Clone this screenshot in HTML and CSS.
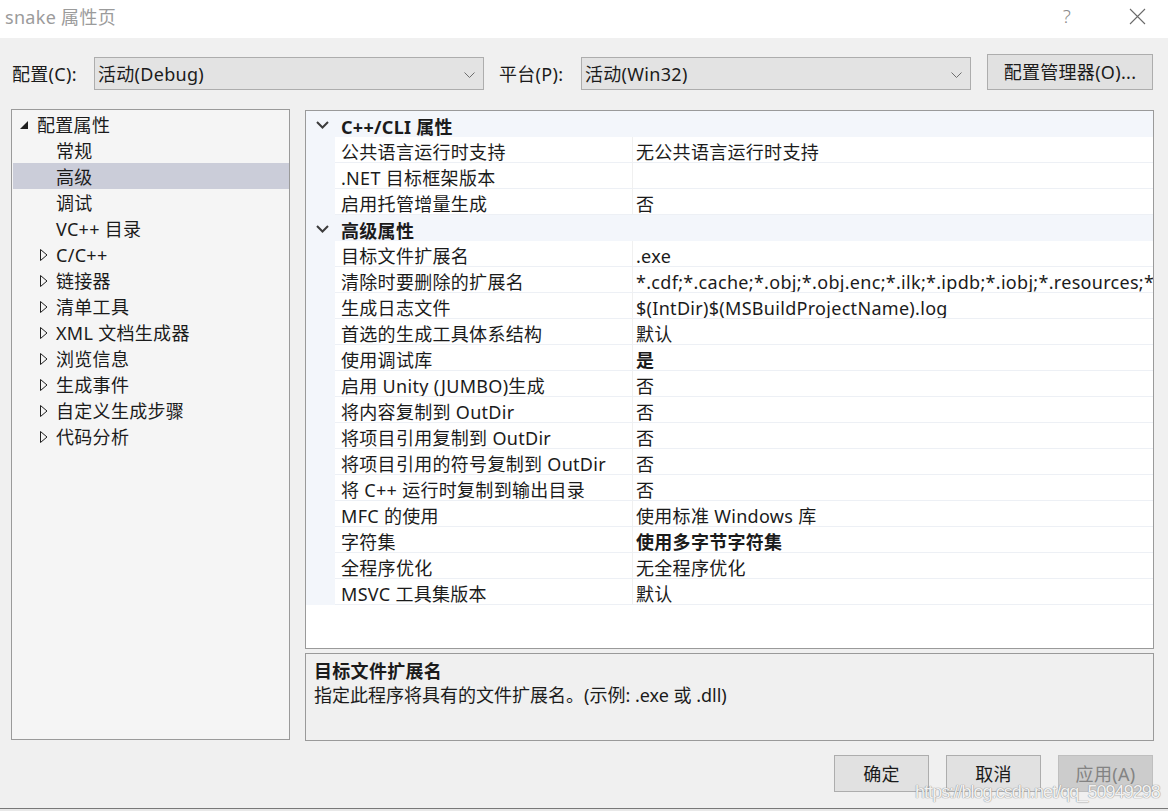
FILE: index.html
```html
<!DOCTYPE html>
<html lang="zh-CN">
<head>
<meta charset="utf-8">
<title>snake 属性页</title>
<link rel="stylesheet" href="styles.css">
</head>
<body>
<div class="window">
  <div class="titlebar">
    <span class="title">snake 属性页</span>
    <span class="help">?</span>
    <svg class="close" width="17" height="17" viewBox="0 0 17 17"><path d="M1 1L16 16M16 1L1 16" stroke="#6a6a6a" stroke-width="1.1" fill="none"/></svg>
  </div>

  <div class="toolbar">
    <span class="lbl">配置(C):</span>
    <div class="combo"><span>活动(Debug)</span><svg width="11" height="6" viewBox="0 0 11 6"><path d="M0.5 0.5L5.5 5.5L10.5 0.5" stroke="#6d6d6d" fill="none"/></svg></div>
    <span class="lbl lbl2">平台(P):</span>
    <div class="combo"><span>活动(Win32)</span><svg width="11" height="6" viewBox="0 0 11 6"><path d="M0.5 0.5L5.5 5.5L10.5 0.5" stroke="#6d6d6d" fill="none"/></svg></div>
    <button class="btn mgr">配置管理器(O)...</button>
  </div>

  <div class="content">
    <div class="tree">
      <div class="node root"><svg width="8" height="8" viewBox="0 0 8 8"><polygon points="8,0 8,8 0,8" fill="#1e1e1e"/></svg><span>配置属性</span></div>
      <div class="node leaf">常规</div>
      <div class="node leaf sel">高级</div>
      <div class="node leaf">调试</div>
      <div class="node leaf">VC++ 目录</div>
      <div class="node coll"><svg width="8" height="12" viewBox="0 0 8 12"><polygon points="0.5,0.5 7,6 0.5,11.5" fill="none" stroke="#1e1e1e"/></svg><span>C/C++</span></div>
      <div class="node coll"><svg width="8" height="12" viewBox="0 0 8 12"><polygon points="0.5,0.5 7,6 0.5,11.5" fill="none" stroke="#1e1e1e"/></svg><span>链接器</span></div>
      <div class="node coll"><svg width="8" height="12" viewBox="0 0 8 12"><polygon points="0.5,0.5 7,6 0.5,11.5" fill="none" stroke="#1e1e1e"/></svg><span>清单工具</span></div>
      <div class="node coll"><svg width="8" height="12" viewBox="0 0 8 12"><polygon points="0.5,0.5 7,6 0.5,11.5" fill="none" stroke="#1e1e1e"/></svg><span>XML 文档生成器</span></div>
      <div class="node coll"><svg width="8" height="12" viewBox="0 0 8 12"><polygon points="0.5,0.5 7,6 0.5,11.5" fill="none" stroke="#1e1e1e"/></svg><span>浏览信息</span></div>
      <div class="node coll"><svg width="8" height="12" viewBox="0 0 8 12"><polygon points="0.5,0.5 7,6 0.5,11.5" fill="none" stroke="#1e1e1e"/></svg><span>生成事件</span></div>
      <div class="node coll"><svg width="8" height="12" viewBox="0 0 8 12"><polygon points="0.5,0.5 7,6 0.5,11.5" fill="none" stroke="#1e1e1e"/></svg><span>自定义生成步骤</span></div>
      <div class="node coll"><svg width="8" height="12" viewBox="0 0 8 12"><polygon points="0.5,0.5 7,6 0.5,11.5" fill="none" stroke="#1e1e1e"/></svg><span>代码分析</span></div>
    </div>

    <div class="right">
      <div class="pgrid">
        <div class="cat"><div class="gut"><svg width="13" height="8" viewBox="0 0 13 8"><path d="M1 1L6.5 6.5L12 1" stroke="#3c3c3c" stroke-width="2" fill="none"/></svg></div><div class="catname">C++/CLI 属性</div></div>
        <div class="row"><div class="gut"></div><div class="name">公共语言运行时支持</div><div class="val">无公共语言运行时支持</div></div>
        <div class="row"><div class="gut"></div><div class="name">.NET 目标框架版本</div><div class="val"></div></div>
        <div class="row"><div class="gut"></div><div class="name">启用托管增量生成</div><div class="val">否</div></div>
        <div class="cat"><div class="gut"><svg width="13" height="8" viewBox="0 0 13 8"><path d="M1 1L6.5 6.5L12 1" stroke="#3c3c3c" stroke-width="2" fill="none"/></svg></div><div class="catname">高级属性</div></div>
        <div class="row"><div class="gut"></div><div class="name">目标文件扩展名</div><div class="val">.exe</div></div>
        <div class="row"><div class="gut"></div><div class="name">清除时要删除的扩展名</div><div class="val">*.cdf;*.cache;*.obj;*.obj.enc;*.ilk;*.ipdb;*.iobj;*.resources;*.tlb;*.tli;*.tlh;*.tmp;*.rsp</div></div>
        <div class="row"><div class="gut"></div><div class="name">生成日志文件</div><div class="val">$(IntDir)$(MSBuildProjectName).log</div></div>
        <div class="row"><div class="gut"></div><div class="name">首选的生成工具体系结构</div><div class="val">默认</div></div>
        <div class="row"><div class="gut"></div><div class="name">使用调试库</div><div class="val b">是</div></div>
        <div class="row"><div class="gut"></div><div class="name">启用 Unity (JUMBO)生成</div><div class="val">否</div></div>
        <div class="row"><div class="gut"></div><div class="name">将内容复制到 OutDir</div><div class="val">否</div></div>
        <div class="row"><div class="gut"></div><div class="name">将项目引用复制到 OutDir</div><div class="val">否</div></div>
        <div class="row"><div class="gut"></div><div class="name">将项目引用的符号复制到 OutDir</div><div class="val">否</div></div>
        <div class="row"><div class="gut"></div><div class="name">将 C++ 运行时复制到输出目录</div><div class="val">否</div></div>
        <div class="row"><div class="gut"></div><div class="name">MFC 的使用</div><div class="val">使用标准 Windows 库</div></div>
        <div class="row"><div class="gut"></div><div class="name">字符集</div><div class="val b">使用多字节字符集</div></div>
        <div class="row"><div class="gut"></div><div class="name">全程序优化</div><div class="val">无全程序优化</div></div>
        <div class="row"><div class="gut"></div><div class="name">MSVC 工具集版本</div><div class="val">默认</div></div>
      </div>
      <div class="desc">
        <div class="dtitle">目标文件扩展名</div>
        <div class="dtext">指定此程序将具有的文件扩展名。(示例: .exe 或 .dll)</div>
      </div>
    </div>
  </div>

  <div class="footer">
    <button class="btn act">确定</button>
    <button class="btn act">取消</button>
    <button class="btn act dis">应用(A)</button>
  </div>
  <div class="spacer"></div>
  <div class="taskstrip"></div>
  <div class="watermark">https://blog.csdn.net/qq_50949298</div>
</div>
</body>
</html>
```

FILE: styles.css
```css
* { box-sizing: border-box; }
html, body { margin: 0; padding: 0; }
body {
  background: #f0f0f0;
  font-family: "Noto Sans", "Noto Sans CJK SC", sans-serif;
  font-size: 18px;
  letter-spacing: 0.3px;
  color: #1b1b1b;
}
.window {
  position: relative;
  width: 1168px;
  height: 811px;
  display: flex;
  flex-direction: column;
  overflow: hidden;
}
.titlebar {
  height: 38px;
  background: #fff;
  display: flex;
  align-items: center;
  padding-left: 5px;
  flex: none;
}
.title {
  color: #9b9b9b;
  font-size: 18px;
  line-height: 20px;
  margin-top: -5px;
}
.help {
  margin-left: auto;
  color: #8a8a8a;
  font-size: 19px;
  font-weight: 300;
  line-height: 20px;
  margin-top: -6px;
}
.close {
  margin-left: 58px;
  margin-right: 22px;
  margin-top: -5px;
}

.toolbar {
  display: flex;
  align-items: center;
  height: 36px;
  margin-top: 16px;
  padding-left: 12px;
  flex: none;
}
.lbl { width: 82px; line-height: 20px; padding-top: 4px; }
.lbl2 { margin-left: 15px; }
.combo {
  width: 390px;
  height: 33px;
  margin-top: 3px;
  background: #e3e3e3;
  border: 1px solid #adadad;
  display: flex;
  align-items: center;
  padding-left: 3px;
  padding-right: 8px;
}
.combo span { flex: 1; line-height: 20px; padding-top: 1px; }
.combo svg { margin-top: 2px; }
.btn {
  font-family: inherit;
  font-size: 18px;
  letter-spacing: 0.3px;
  color: #1b1b1b;
  background: #e1e1e1;
  border: 1px solid #adadad;
  padding: 0;
  line-height: 20px;
}
.mgr {
  width: 166px;
  height: 36px;
  margin-left: 16px;
}

.content {
  display: flex;
  margin-top: 19px;
  padding-left: 11px;
  flex: none;
}
.tree {
  width: 279px;
  height: 631px;
  background: #f5f5f5;
  border: 1px solid #9a9a9a;
  padding: 1px 0 0 1px;
}
.node {
  height: 26px;
  display: flex;
  align-items: center;
  line-height: 20px;
  padding-top: 2px;
}
.root { padding-left: 7px; }
.root svg { margin-right: 9px; margin-top: 0; }
.leaf { padding-left: 43px; }
.coll { padding-left: 27px; }
.coll svg { margin-right: 8px; margin-top: -1px; }
.sel { background: #cbcdd9; }

.right {
  width: 849px;
  margin-left: 15px;
  display: flex;
  flex-direction: column;
}
.pgrid {
  height: 539px;
  margin-top: 1px;
  background: #fff;
  border: 1px solid #9a9a9a;
}
.cat, .row {
  display: flex;
  height: 26px;
}
.cat {
  background: #f3f6fb;
  align-items: center;
}
.gut {
  width: 29px;
  flex: none;
  align-self: stretch;
  background: #f3f6fb;
  display: flex;
  align-items: center;
  justify-content: center;
  padding-left: 3px;
}
.gut svg { margin-top: 1px; }
.catname {
  font-weight: 700;
  padding-left: 6px;
  padding-top: 5px;
  line-height: 20px;
}
.row .name, .row .val {
  border-bottom: 1px solid #edf0f5;
  display: flex;
  align-items: center;
  line-height: 20px;
  padding-top: 4px;
  white-space: nowrap;
  overflow: hidden;
}
.row .name {
  width: 298px;
  flex: none;
  padding-left: 6px;
  border-right: 1px solid #f0f0f0;
}
.row .val {
  flex: 1;
  padding-left: 3px;
}
.val.b { font-weight: 700; }

.desc {
  margin-top: 4px;
  height: 88px;
  border: 1px solid #9a9a9a;
  background: #f0f0f0;
  padding: 6px 0 0 8px;
}
.dtitle { font-weight: 700; line-height: 22px; }
.dtext { line-height: 24px; margin-top: 1px; letter-spacing: 0; }

.footer {
  display: flex;
  justify-content: flex-end;
  gap: 17px;
  margin-top: 14px;
  padding-right: 15px;
  flex: none;
}
.act { width: 95px; height: 37px; }
.dis {
  background: #cccccc;
  border-color: #bfbfbf;
  color: #838383;
}
.spacer { flex: 1; }
.taskstrip {
  height: 3px;
  flex: none;
  border-top: 1px solid #787878;
  background: #e8e8e8;
}
.watermark {
  position: absolute;
  left: 915px;
  top: 782px;
  font-family: "Liberation Sans", sans-serif;
  font-size: 18px;
  letter-spacing: -0.95px;
  color: rgba(255, 255, 255, 0.9);
  text-shadow: 0 0 1px #8f8f8f, 0 0 1px #8f8f8f;
  white-space: nowrap;
}
```
